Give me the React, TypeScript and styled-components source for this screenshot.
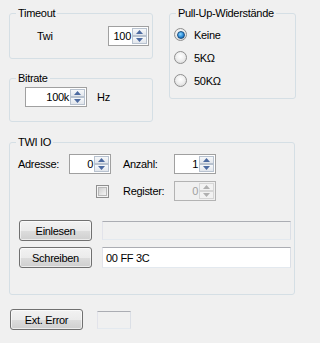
import React from "react";
import styled, { createGlobalStyle } from "styled-components";

const Global = createGlobalStyle`
  html, body { margin: 0; padding: 0; background: #f0f0f0; }
  body { font-family: "Liberation Sans", Arial, sans-serif; font-size: 11px; color: #000; }
`;

const Window = styled.div`
  width: 301px;
  height: 343px;
  box-sizing: border-box;
  padding: 7px 6px 0 9px;
  background: #f0f0f0;
  letter-spacing: -0.3px;
`;

const TopRow = styled.div`
  display: grid;
  grid-template-columns: 144px 127px;
  column-gap: 16px;
  align-items: start;
`;

const LeftColumn = styled.div`
  display: flex;
  flex-direction: column;
  gap: 13px;
`;

const Group = styled.fieldset<{ $h: number }>`
  margin: 0;
  padding: 0;
  min-width: 0;
  height: ${(p) => p.$h}px;
  box-sizing: border-box;
  border: 1px solid #d5dfe5;
  border-radius: 3px;
`;

const Legend = styled.legend`
  margin-left: 6px;
  padding: 0 2px;
  line-height: 13px;
  font-size: 11px;
`;

const TimeoutRow = styled.div`
  display: flex;
  align-items: center;
  justify-content: space-between;
  padding: 6px 3px 0 27px;
`;

const BitrateRow = styled.div`
  display: flex;
  align-items: center;
  gap: 10px;
  padding: 2px 0 0 15px;
`;

const RadioList = styled.div`
  display: flex;
  flex-direction: column;
  padding: 3px 0 0 4px;
`;

const RadioRow = styled.label`
  display: flex;
  align-items: center;
  gap: 7px;
  height: 23px;
`;

const RadioDot = styled.span<{ $on?: boolean }>`
  position: relative;
  width: 13px;
  height: 13px;
  box-sizing: border-box;
  border-radius: 50%;
  border: 1px solid #8f8f8f;
  background: radial-gradient(circle at 50% 40%, #ffffff 0%, #f0f0f0 45%, #d2d2d2 100%);
  display: flex;
  align-items: center;
  justify-content: center;
  &::after {
    content: "";
    display: ${(p) => (p.$on ? "block" : "none")};
    width: 6px;
    height: 6px;
    border-radius: 50%;
    border: 0.5px solid #1c4f80;
    background: radial-gradient(circle at 40% 35%, #8fd8ff 0%, #2a8ad8 55%, #0d4a8a 100%);
  }
`;

const Twi = styled.div`
  display: flex;
  flex-direction: column;
  margin-top: 14px;
`;

const TwiGrid = styled.div`
  display: grid;
  grid-template-columns: 51px 54px 51px 42px;
  grid-auto-rows: 20px;
  row-gap: 7px;
  align-items: center;
  padding: 5px 0 0 8px;
`;

const CheckCell = styled.div`
  display: flex;
  padding-left: 27px;
`;

const CheckBox = styled.span`
  width: 13px;
  height: 13px;
  box-sizing: border-box;
  border: 1px solid #8f8f8f;
  background: #f4f4f4;
  display: flex;
  align-items: center;
  justify-content: center;
  &::after {
    content: "";
    width: 9px;
    height: 9px;
    background: linear-gradient(135deg, #cfcfcf 0%, #e6e6e6 60%, #f4f4f4 100%);
    border: 0.5px solid #b8b8b8;
    box-sizing: border-box;
  }
`;

const ActionList = styled.div`
  display: flex;
  flex-direction: column;
  gap: 6px;
  padding: 19px 0 0 9px;
`;

const ActionRow = styled.div`
  display: flex;
  align-items: center;
  gap: 10px;
`;

const Button = styled.button<{ $w: number }>`
  width: ${(p) => p.$w}px;
  height: 21px;
  box-sizing: border-box;
  padding: 0;
  border: 1px solid #707070;
  border-radius: 3px;
  background: linear-gradient(#f2f2f2 0%, #ebebeb 50%, #dddddd 51%, #cfcfcf 100%);
  box-shadow: inset 0 0 0 1px rgba(255, 255, 255, 0.6);
  font-family: "Liberation Sans", Arial, sans-serif;
  font-size: 11px;
  letter-spacing: -0.3px;
  color: #000;
`;

const TextField = styled.div<{ $w: number; $h: number; $disabled?: boolean }>`
  width: ${(p) => p.$w}px;
  height: ${(p) => p.$h}px;
  box-sizing: border-box;
  border: 1px solid #abadb3;
  border-color: #abadb3 #dbdfe6 #e3e9ef #e2e3ea;
  background: ${(p) => (p.$disabled ? "#f0f0f0" : "#ffffff")};
  padding-left: 3px;
  display: flex;
  align-items: center;
  font-size: 11px;
`;

const SpinBox = styled.div<{ $w: number; $disabled?: boolean }>`
  display: flex;
  width: ${(p) => p.$w}px;
  height: 20px;
  box-sizing: border-box;
  border: 1px solid ${(p) => (p.$disabled ? "#b3b3b3" : "#a0a0a0")};
  background: ${(p) => (p.$disabled ? "#f0f0f0" : "#ffffff")};
`;

const SpinValue = styled.div<{ $disabled?: boolean }>`
  flex: 1;
  text-align: right;
  padding-right: 1px;
  line-height: 18px;
  color: ${(p) => (p.$disabled ? "#a0a0a0" : "#000")};
`;

const SpinButtons = styled.div`
  display: flex;
  flex-direction: column;
  width: 16px;
  padding: 1px 1px 1px 0;
  box-sizing: border-box;
`;

const SpinButton = styled.div<{ $disabled?: boolean }>`
  flex: 1;
  display: flex;
  align-items: center;
  justify-content: center;
  border: 1px solid ${(p) => (p.$disabled ? "#d6d6d6" : "#b8c2cf")};
  background: ${(p) =>
    p.$disabled ? "#f2f2f2" : "linear-gradient(#f6f8fa, #e2e6ec)"};
  & + & {
    margin-top: 0;
  }
`;

const Footer = styled.div`
  display: flex;
  align-items: center;
  gap: 14px;
  padding: 14px 0 0 1px;
`;

const Label = styled.span``;

const Arrow = ({ up, disabled }: { up?: boolean; disabled?: boolean }) => (
  <svg width="7" height="4" viewBox="0 0 7 4">
    <path
      d={up ? "M0 4 L3.5 0 L7 4 Z" : "M0 0 L3.5 4 L7 0 Z"}
      fill={disabled ? "#b0b0b0" : "#4c6aa0"}
    />
  </svg>
);

const Spin = ({ w, value, disabled }: { w: number; value: string; disabled?: boolean }) => (
  <SpinBox $w={w} $disabled={disabled}>
    <SpinValue $disabled={disabled}>{value}</SpinValue>
    <SpinButtons>
      <SpinButton $disabled={disabled}>
        <Arrow up disabled={disabled} />
      </SpinButton>
      <SpinButton $disabled={disabled}>
        <Arrow disabled={disabled} />
      </SpinButton>
    </SpinButtons>
  </SpinBox>
);

export default function App() {
  return (
    <>
      <Global />
      <Window>
        <TopRow>
          <LeftColumn>
            <Group $h={52}>
              <Legend>Timeout</Legend>
              <TimeoutRow>
                <Label>Twi</Label>
                <Spin w={41} value="100" />
              </TimeoutRow>
            </Group>
            <Group $h={50}>
              <Legend>Bitrate</Legend>
              <BitrateRow>
                <Spin w={62} value="100k" />
                <Label>Hz</Label>
              </BitrateRow>
            </Group>
          </LeftColumn>
          <Group $h={92}>
            <Legend>Pull-Up-Widerstände</Legend>
            <RadioList>
              <RadioRow>
                <RadioDot $on />
                Keine
              </RadioRow>
              <RadioRow>
                <RadioDot />
                5KΩ
              </RadioRow>
              <RadioRow>
                <RadioDot />
                50KΩ
              </RadioRow>
            </RadioList>
          </Group>
        </TopRow>
        <Twi>
          <Group $h={159}>
            <Legend>TWI IO</Legend>
            <TwiGrid>
              <Label>Adresse:</Label>
              <Spin w={42} value="0" />
              <Label>Anzahl:</Label>
              <Spin w={42} value="1" />
              <span />
              <CheckCell>
                <CheckBox />
              </CheckCell>
              <Label>Register:</Label>
              <Spin w={42} value="0" disabled />
            </TwiGrid>
            <ActionList>
              <ActionRow>
                <Button $w={73}>Einlesen</Button>
                <TextField $w={189} $h={19} $disabled />
              </ActionRow>
              <ActionRow>
                <Button $w={73}>Schreiben</Button>
                <TextField $w={189} $h={21}>00 FF 3C</TextField>
              </ActionRow>
            </ActionList>
          </Group>
        </Twi>
        <Footer>
          <Button $w={73}>Ext. Error</Button>
          <TextField $w={34} $h={18} $disabled />
        </Footer>
      </Window>
    </>
  );
}
